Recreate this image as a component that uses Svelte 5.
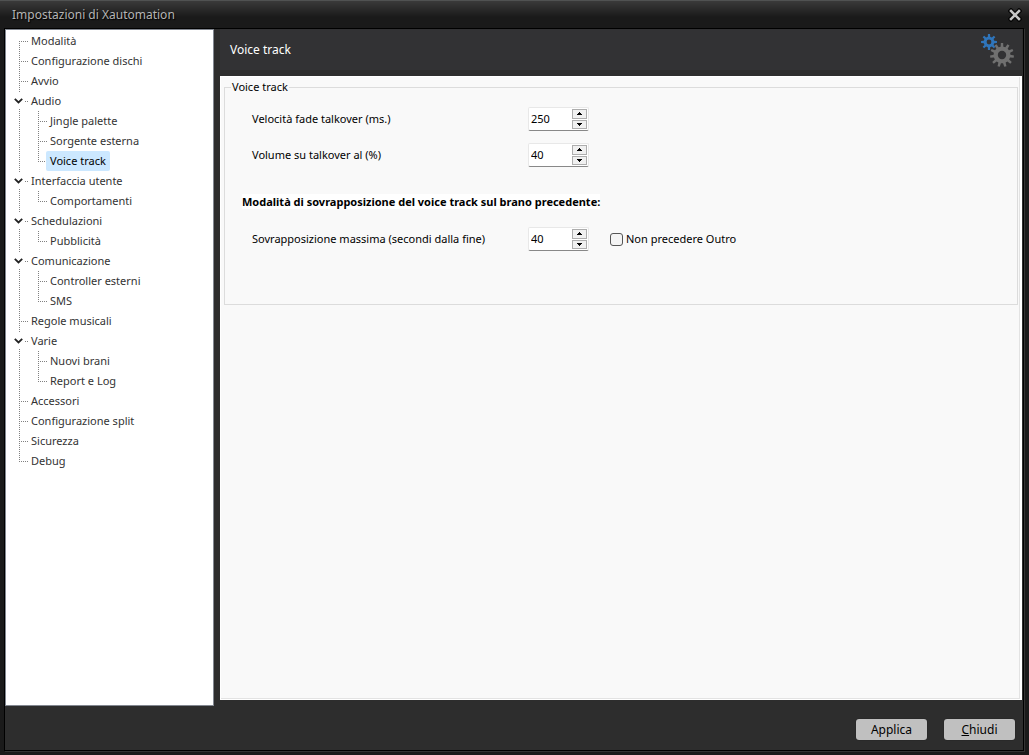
<script lang="ts">
	type Item = { label: string; children?: Item[] };

	const items: Item[] = [
		{ label: 'Modalità' },
		{ label: 'Configurazione dischi' },
		{ label: 'Avvio' },
		{
			label: 'Audio',
			children: [{ label: 'Jingle palette' }, { label: 'Sorgente esterna' }, { label: 'Voice track' }]
		},
		{ label: 'Interfaccia utente', children: [{ label: 'Comportamenti' }] },
		{ label: 'Schedulazioni', children: [{ label: 'Pubblicità' }] },
		{ label: 'Comunicazione', children: [{ label: 'Controller esterni' }, { label: 'SMS' }] },
		{ label: 'Regole musicali' },
		{ label: 'Varie', children: [{ label: 'Nuovi brani' }, { label: 'Report e Log' }] },
		{ label: 'Accessori' },
		{ label: 'Configurazione split' },
		{ label: 'Sicurezza' },
		{ label: 'Debug' }
	];

	let selected = $state('Voice track');
	let closed: Record<string, boolean> = $state({});
	let values = $state({ fade: 250, volume: 40, overlap: 40 });
	let keepOutro = $state(false);

	function select(e: MouseEvent, label: string) {
		e.preventDefault();
		selected = label;
	}

	// outline of a cog centred on 0,0
	function cog(teeth: number, outer: number, inner: number): string {
		const step = (Math.PI * 2) / teeth;
		const pts: string[] = [];
		for (let i = 0; i < teeth; i++) {
			const a = i * step - Math.PI / 2;
			for (const [r, k] of [[inner, -0.28], [outer, -0.17], [outer, 0.17], [inner, 0.28]]) {
				pts.push(`${(Math.cos(a + k * step) * r).toFixed(2)} ${(Math.sin(a + k * step) * r).toFixed(2)}`);
			}
		}
		return `M${pts.join('L')}Z`;
	}
</script>

{#snippet branch(list: Item[])}
	<ul>
		{#each list as item (item.label)}
			<li>
				<div class="node">
					{#if item.children}
						<button
							class="toggle"
							class:closed={closed[item.label]}
							aria-label={item.label}
							aria-expanded={!closed[item.label]}
							onclick={() => (closed[item.label] = !closed[item.label])}
						>
							<svg width="9" height="6" viewBox="0 0 9 6"><path d="M0.8 0.8L4.5 4.5L8.2 0.8" /></svg>
						</button>
					{/if}
					<a
						href="#settings"
						class:selected={selected === item.label}
						onclick={(e) => select(e, item.label)}>{item.label}</a
					>
				</div>
				{#if item.children && !closed[item.label]}
					{@render branch(item.children)}
				{/if}
			</li>
		{/each}
	</ul>
{/snippet}

{#snippet spinner(id: 'fade' | 'volume' | 'overlap')}
	<div class="spinner">
		<input {id} type="number" bind:value={values[id]} />
		<div class="arrows">
			<button aria-label="+" tabindex="-1" onclick={() => values[id]++}>
				<svg width="5" height="3" viewBox="0 0 5 3"><path d="M2 0h1v1h1v1h1v1H0V2h1V1h1z" /></svg>
			</button>
			<button aria-label="-" tabindex="-1" onclick={() => values[id]--}>
				<svg width="5" height="3" viewBox="0 0 5 3"><path d="M0 0h5v1H4v1H3v1H2V2H1V1H0z" /></svg>
			</button>
		</div>
	</div>
{/snippet}

<div class="window">
	<header class="titlebar">
		<h1>Impostazioni di Xautomation</h1>
		<button class="close" aria-label="Chiudi finestra">
			<svg width="14" height="14" viewBox="0 0 14 14">
				<path class="edge" d="M3 3L11 11M11 3L3 11" />
				<path class="cross" d="M3 3L11 11M11 3L3 11" />
			</svg>
		</button>
	</header>

	<div class="client">
		<div class="body">
			<nav class="tree">{@render branch(items)}</nav>

			<main id="settings">
				<div class="heading">
					<h2>Voice track</h2>
					<svg width="34" height="34" viewBox="0 0 34 34" aria-hidden="true">
						<g transform="translate(9 9)">
							<path class="cog-small" d={cog(8, 8, 5.4)} />
							<circle r="2.4" />
						</g>
						<g transform="translate(22 22)">
							<path class="cog-big" d={cog(11, 12, 8.4)} />
							<circle r="4.2" />
						</g>
					</svg>
				</div>

				<div class="panel">
					<div class="panel-inner">
						<fieldset>
							<legend>Voice track</legend>
							<div class="row">
								<label for="fade">Velocità fade talkover (ms.)</label>
								{@render spinner('fade')}
							</div>
							<div class="row">
								<label for="volume">Volume su talkover al (%)</label>
								{@render spinner('volume')}
							</div>
							<h3><span>Modalità di sovrapposizione del voice track sul brano precedente:</span></h3>
							<div class="row">
								<label for="overlap">Sovrapposizione massima (secondi dalla fine)</label>
								{@render spinner('overlap')}
								<label class="check">
									<input type="checkbox" bind:checked={keepOutro} />
									Non precedere Outro
								</label>
							</div>
						</fieldset>
					</div>
				</div>
			</main>
		</div>

		<footer>
			<button class="btn">Applica</button>
			<button class="btn"><u>C</u>hiudi</button>
		</footer>
	</div>
</div>

<style>
	:global(body) {
		background: #1a1a1a;
	}

	.window {
		box-sizing: border-box;
		min-height: 100vh;
		display: flex;
		flex-direction: column;
		padding: 0 5px 4px 4px;
		background: linear-gradient(#3a3a3a, #1a1a1a 16px);
		border-top: 1px solid #505252;
		font-family: 'Noto Sans', 'Segoe UI', sans-serif;
		font-size: 11px;
		line-height: 20px;
		color: #000;
	}

	button,
	input {
		font: inherit;
		color: inherit;
	}

	h1,
	h2,
	h3 {
		margin: 0;
		font-size: 12px;
		font-weight: 400;
	}

	.titlebar {
		display: flex;
		align-items: center;
		justify-content: space-between;
		height: 27px;
		padding: 0 2px 0 8px;
	}

	.titlebar h1 {
		color: #b4b4b4;
		text-shadow: 1px 1px 1px #000;
	}

	.close {
		display: flex;
		padding: 0;
		border: 0;
		background: none;
	}

	.close path {
		stroke-linecap: square;
		stroke-width: 2.5;
	}

	.close .edge {
		stroke: #050505;
		stroke-width: 5;
	}

	.close .cross {
		stroke: #c4c4c4;
	}

	.client {
		flex: 1;
		display: flex;
		flex-direction: column;
		border: 1px solid #000;
		box-shadow: 1px 1px 0 #333;
		background: #2d2d2d;
	}

	.body {
		flex: 1;
		display: flex;
		gap: 6px;
	}

	.tree {
		box-sizing: border-box;
		width: 209px;
		padding-top: 1px;
		background: #fff;
		border: 1px solid #828790;
	}

	ul {
		list-style: none;
		margin: 0;
		padding: 0;
	}

	/* dotted guide lines: the trunk, then the arm of the row */
	li {
		background-image: repeating-linear-gradient(#808080 0 1px, transparent 1px 2px),
			repeating-linear-gradient(90deg, #808080 0 1px, transparent 1px 2px);
		background-repeat: no-repeat;
		background-size: 1px 100%, 9px 1px;
		background-position: 13px 0, 13px 10px;
	}

	li:last-child {
		background-size: 1px 11px, 9px 1px;
	}

	.tree > :global(ul > li:first-child) {
		background-position: 13px 10px, 13px 10px;
	}

	li ul {
		margin-left: 19px;
	}

	.node {
		display: flex;
		align-items: center;
		height: 20px;
		padding-left: 21px;
	}

	.node a {
		padding: 0 4px;
		border-radius: 2px;
		color: #333;
		text-decoration: none;
	}

	.node a.selected {
		background: #cce8ff;
		color: #000;
	}

	.toggle {
		display: flex;
		align-items: center;
		justify-content: center;
		width: 13px;
		height: 16px;
		margin-left: -15px;
		margin-right: 2px;
		padding: 0;
		border: 0;
		background: #fff;
	}

	.toggle path {
		fill: none;
		stroke: #222;
		stroke-width: 1.8;
	}

	.toggle.closed svg {
		transform: rotate(-90deg);
	}

	main {
		flex: 1;
		min-width: 0;
		display: flex;
		flex-direction: column;
		padding: 0 1px 6px 0;
	}

	.heading {
		display: flex;
		align-items: center;
		justify-content: space-between;
		height: 41px;
		margin-bottom: 6px;
		padding: 0 8px 0 10px;
		background: #323234;
	}

	.heading h2 {
		color: #fff;
	}

	.cog-small {
		fill: #2f75bb;
	}

	.cog-big {
		fill: #707070;
	}

	circle {
		fill: #323234;
	}

	.panel {
		flex: 1;
		display: flex;
		padding: 1px 2px 1px 1px;
		background: #fff;
	}

	.panel-inner {
		flex: 1;
		padding: 2px 1px 0 3px;
		background: #f9f9f9;
		border-right: 1px solid #e3e3e3;
		border-bottom: 1px solid #e3e3e3;
	}

	fieldset {
		min-width: 0;
		margin: 0;
		padding: 12px 17px 41px;
		border: 1px solid #dcdcdc;
	}

	legend {
		margin-left: -11px;
		padding: 0 1px;
		line-height: 16px;
	}

	.row {
		display: grid;
		grid-template-columns: 276px 61px auto;
		justify-content: start;
		align-items: center;
		padding-left: 10px;
		margin-bottom: 12px;
	}

	h3 {
		font-size: 11px;
		font-weight: 700;
		padding: 13px 0 15px;
	}

	h3 span {
		background: #fff;
	}

	.spinner {
		box-sizing: border-box;
		display: flex;
		height: 24px;
		border: 1px solid #e8e8e8;
		border-bottom-color: #888;
		border-radius: 2px;
		background: #fff;
	}

	.spinner input {
		flex: 1;
		min-width: 0;
		padding: 0 2px;
		border: 0;
		outline: 0;
		background: none;
		appearance: textfield;
	}

	.spinner input::-webkit-inner-spin-button {
		appearance: none;
		margin: 0;
	}

	.arrows {
		display: flex;
		flex-direction: column;
		gap: 1px;
		padding: 1px;
	}

	.arrows button {
		flex: 1;
		display: flex;
		align-items: center;
		justify-content: center;
		width: 15px;
		padding: 0;
		border: 1px solid #adadad;
		background: #f0f0f0;
	}

	.check {
		display: flex;
		align-items: center;
		gap: 3px;
		padding-left: 21px;
	}

	.check input {
		appearance: none;
		box-sizing: border-box;
		width: 13px;
		height: 13px;
		margin: 0;
		border: 1px solid #555;
		border-radius: 3px;
		background: #f4f4f4;
	}

	.check input:checked {
		background: #0067c0;
	}

	footer {
		display: flex;
		justify-content: flex-end;
		gap: 17px;
		padding: 13px 8px 10px;
	}

	.btn {
		width: 71px;
		height: 21px;
		padding: 0;
		border: 0;
		border-radius: 3px;
		background: #c0c0c0;
		font-size: 12px;
		line-height: 20px;
		box-shadow: 0 0 1px #111;
	}
</style>
